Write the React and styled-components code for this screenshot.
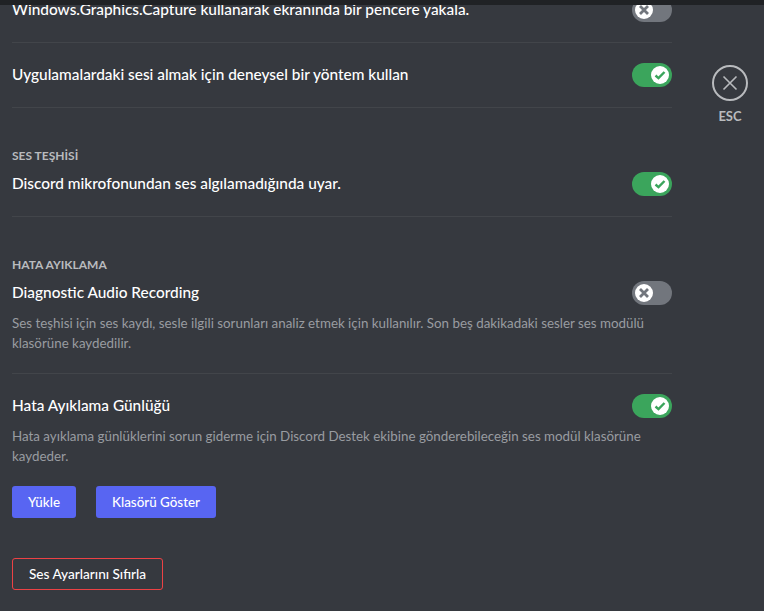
import React from 'react';
import styled, { createGlobalStyle } from 'styled-components';

const Global = createGlobalStyle`
  html, body { margin: 0; height: 100%; background: #36393f; overflow: hidden; }
  body { font-family: Lato, "Noto Sans", sans-serif; }
`;

const Page = styled.div`
  height: 611px;
  display: flex;
  flex-direction: column;
  background: #36393f;
  overflow: hidden;
`;

const TopBar = styled.div`
  height: 5px;
  flex: none;
  background: #202225;
  position: relative;
  z-index: 1;
`;

const Main = styled.div`
  flex: 1;
  display: flex;
  min-height: 0;
`;

const Content = styled.div`
  width: 660px;
  margin-left: 12px;
  flex: none;
  margin-top: -7px;
`;

const Row = styled.div`
  display: flex;
  align-items: center;
  justify-content: space-between;
  height: 24px;
`;

const Title = styled.div`
  font-size: 15.4px;
  font-weight: 500;
  line-height: 24px;
  color: #fff;
  margin-top: -2px;
`;

const Divider = styled.div`
  height: 1px;
  background: #42454a;
  margin-top: 20px;
  margin-bottom: ${p => p.$bottom}px;
`;

const Heading = styled.div`
  font-size: 12px;
  font-weight: 700;
  line-height: 16px;
  color: #b9bbbe;
  margin-bottom: 8px;
`;

const Note = styled.div`
  font-size: 13.35px;
  line-height: 20px;
  color: #999ca1;
  margin-top: 8px;
`;

const Track = styled.div`
  width: 40px;
  height: 24px;
  border-radius: 12px;
  flex: none;
  display: flex;
  align-items: center;
  padding: 0 3px;
  box-sizing: border-box;
  background: ${p => (p.$on ? '#3ba55c' : '#72767d')};
  justify-content: ${p => (p.$on ? 'flex-end' : 'flex-start')};
`;

const Knob = styled.div`
  width: 18px;
  height: 18px;
  border-radius: 50%;
  background: #fff;
  display: flex;
  align-items: center;
  justify-content: center;
`;

const Buttons = styled.div`
  display: flex;
  gap: 20px;
  margin-top: 20px;
`;

const Button = styled.div`
  height: 32px;
  padding: 0 16px;
  display: flex;
  align-items: center;
  border-radius: 3px;
  background: #5865f2;
  color: #fff;
  font-size: 13.4px;
  font-weight: 500;
`;

const ResetButton = styled.div`
  width: fit-content;
  height: 32px;
  box-sizing: border-box;
  padding: 0 16px;
  margin-top: 40px;
  display: flex;
  align-items: center;
  border: 1px solid #ed4245;
  border-radius: 3px;
  color: #fff;
  font-size: 13.6px;
  font-weight: 500;
`;

const Side = styled.div`
  margin-left: 40px;
  margin-top: 60px;
  width: 36px;
  display: flex;
  flex-direction: column;
  align-items: center;
  gap: 8px;
`;

const Close = styled.div`
  width: 36px;
  height: 36px;
  box-sizing: border-box;
  border: 2px solid #b9bbbe;
  border-radius: 50%;
  display: flex;
  align-items: center;
  justify-content: center;
`;

const Esc = styled.div`
  font-size: 13px;
  font-weight: 700;
  line-height: 14px;
  color: #b9bbbe;
`;

function Toggle({ on }) {
  return (
    <Track $on={on}>
      <Knob>
        {on ? (
          <svg width="14" height="14" viewBox="0 0 14 14">
            <path d="M2.5 7.5 L5.5 10.2 L11.5 4" fill="none" stroke="#3ba55c" strokeWidth="2.4" />
          </svg>
        ) : (
          <svg width="14" height="14" viewBox="0 0 14 14">
            <path d="M3 3 L11 11 M11 3 L3 11" fill="none" stroke="#72767d" strokeWidth="2.8" />
          </svg>
        )}
      </Knob>
    </Track>
  );
}

export default function App() {
  return (
    <Page>
      <Global />
      <TopBar />
      <Main>
        <Content>
          <Row>
            <Title>Windows.Graphics.Capture kullanarak ekranında bir pencere yakala.</Title>
            <Toggle on={false} />
          </Row>
          <Divider $bottom={20} />
          <Row>
            <Title>Uygulamalardaki sesi almak için deneysel bir yöntem kullan</Title>
            <Toggle on />
          </Row>
          <Divider $bottom={40} />
          <Heading>SES TEŞHİSİ</Heading>
          <Row>
            <Title>Discord mikrofonundan ses algılamadığında uyar.</Title>
            <Toggle on />
          </Row>
          <Divider $bottom={40} />
          <Heading>HATA AYIKLAMA</Heading>
          <Row>
            <Title>Diagnostic Audio Recording</Title>
            <Toggle on={false} />
          </Row>
          <Note>
            Ses teşhisi için ses kaydı, sesle ilgili sorunları analiz etmek için kullanılır. Son beş dakikadaki sesler ses modülü klasörüne kaydedilir.
          </Note>
          <Divider $bottom={20} />
          <Row>
            <Title>Hata Ayıklama Günlüğü</Title>
            <Toggle on />
          </Row>
          <Note>
            Hata ayıklama günlüklerini sorun giderme için Discord Destek ekibine gönderebileceğin ses modül klasörüne kaydeder.
          </Note>
          <Buttons>
            <Button>Yükle</Button>
            <Button>Klasörü Göster</Button>
          </Buttons>
          <ResetButton>Ses Ayarlarını Sıfırla</ResetButton>
        </Content>
        <Side>
          <Close>
            <svg width="18" height="18" viewBox="0 0 18 18">
              <path d="M2.5 2.5 L15.5 15.5 M15.5 2.5 L2.5 15.5" fill="none" stroke="#b9bbbe" strokeWidth="1.6" />
            </svg>
          </Close>
          <Esc>ESC</Esc>
        </Side>
      </Main>
    </Page>
  );
}
